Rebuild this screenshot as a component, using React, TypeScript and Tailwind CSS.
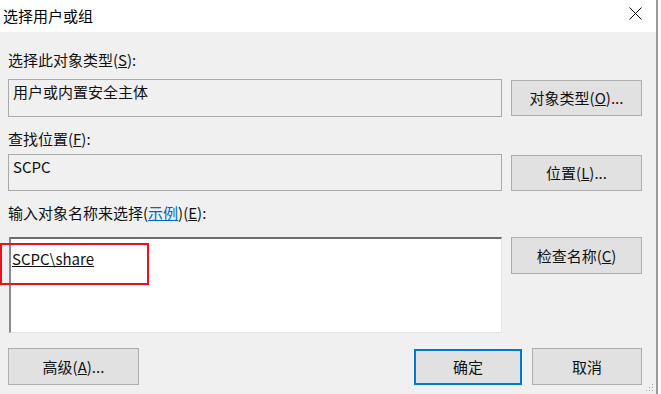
import React from 'react';

const font = { fontFamily: '"Noto Sans CJK SC", "Noto Sans", sans-serif' };

const Btn: React.FC<{ children: React.ReactNode; className?: string; primary?: boolean }> = ({
  children,
  className = '',
  primary,
}) => (
  <button
    className={`flex items-center justify-center bg-[#e1e1e1] text-[15px] leading-5 text-[#111] ${
      primary ? 'border-2 border-[#0078d7]' : 'border border-[#adadad]'
    } ${className}`}
  >
    {children}
  </button>
);

const ReadOnlyBox: React.FC<{ children: React.ReactNode; className?: string }> = ({ children, className = '' }) => (
  <div
    className={`w-[494px] border border-[#a9a9a9] bg-[#f0f0f0] pl-1 pt-[2px] text-[15px] leading-5 text-[#111] ${className}`}
  >
    {children}
  </div>
);

export default function App() {
  return (
    <div className="relative flex h-[394px] w-[661px] overflow-hidden bg-[#f0f0f0]" style={font}>
      <div className="flex w-[656px] flex-col">
        {/* title bar */}
        <div className="flex h-[32px] shrink-0 items-center justify-between bg-white pl-[3px] pr-[14px]">
          <span className="text-[15px] leading-5 text-black">选择用户或组</span>
          <svg width="13" height="13" viewBox="0 0 13 13" className="mb-[5px]">
            <path d="M0.5 0.5 L12.5 12.5 M12.5 0.5 L0.5 12.5" stroke="#000" strokeWidth="1" fill="none" />
          </svg>
        </div>

        {/* body */}
        <div className="flex flex-col pl-[8px] text-[15px] leading-5 text-[#111]">
          <div className="mt-[18px]">
            选择此对象类型(<u>S</u>):
          </div>
          <div className="mt-[9px] flex gap-[9px]">
            <ReadOnlyBox className="h-[38px]">用户或内置安全主体</ReadOnlyBox>
            <Btn className="mt-px h-[36px] w-[131px]">
              对象类型(<u>O</u>)...
            </Btn>
          </div>

          <div className="mt-[12px]">
            查找位置(<u>F</u>):
          </div>
          <div className="mt-[5px] flex gap-[9px]">
            <ReadOnlyBox className="h-[37px]">SCPC</ReadOnlyBox>
            <Btn className="mt-px h-[36px] w-[131px]">
              位置(<u>L</u>)...
            </Btn>
          </div>

          <div className="mt-[12px]">
            输入对象名称来选择(<u className="text-[#0066cc]">示例</u>)(<u>E</u>):
          </div>
          <div className="mt-[14px] flex gap-[9px]">
            <div className="ml-px h-[96px] w-[493px] border-l-2 border-t-2 border-r border-b border-l-[#8a8a8a] border-t-[#6d6d6d] border-r-[#e3e3e3] border-b-[#e3e3e3] bg-white pl-px pt-[10px]">
              <u className="text-[#111]">SCPC\share</u>
            </div>
            <Btn className="h-[37px] w-[131px]">
              检查名称(<u>C</u>)
            </Btn>
          </div>

          <div className="mt-[15px] flex items-center">
            <Btn className="h-[37px] w-[131px]">
              高级(<u>A</u>)...
            </Btn>
            <Btn primary className="ml-[275px] h-[36px] w-[108px]">
              确定
            </Btn>
            <Btn className="ml-[10px] h-[37px] w-[110px]">取消</Btn>
          </div>
        </div>
      </div>

      {/* window edge */}
      <div className="h-full w-[2px] bg-[#9a9a9a]" />
      <div className="h-full flex-1 bg-white" />

      {/* resize grip */}
      <svg width="8" height="8" viewBox="0 0 8 8" className="absolute bottom-[2px] right-[7px]">
        <rect x="6" y="0" width="1" height="1" fill="#a0a0a0" />
        <rect x="3" y="3" width="1" height="1" fill="#a0a0a0" />
        <rect x="6" y="3" width="1" height="1" fill="#a0a0a0" />
        <rect x="0" y="6" width="1" height="1" fill="#a0a0a0" />
        <rect x="3" y="6" width="1" height="1" fill="#a0a0a0" />
        <rect x="6" y="6" width="1" height="1" fill="#a0a0a0" />
      </svg>

      {/* red annotation frame */}
      <div className="absolute left-0 top-[243px] h-[42px] w-[149px] border-2 border-[#e8141c]" />
    </div>
  );
}
